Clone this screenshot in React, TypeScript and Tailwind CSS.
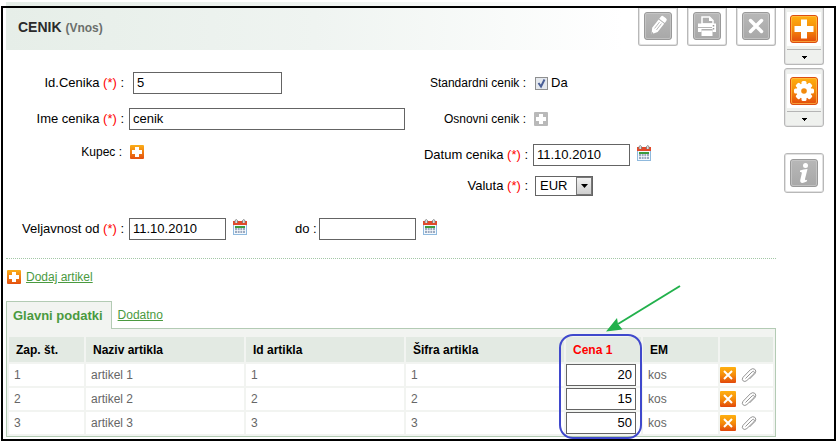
import React from "react";

const rows = [
  { id: 1, name: "artikel 1", price: "20", unit: "kos" },
  { id: 2, name: "artikel 2", price: "15", unit: "kos" },
  { id: 3, name: "artikel 3", price: "50", unit: "kos" },
];

const fieldClass =
  "h-[22px] border border-[#646464] bg-white px-[3px] pb-0.5 text-[13px] leading-4 text-black outline-none";

const PencilGlyph = () => (
  <g transform="rotate(38 14 14)">
    <path d="M10.500 8.500h7V19L14 24.500 10.500 19z" fill="#fff" />
    <path d="M10.500 5q0-2 2-2h3q2 0 2 2v2.500h-7z" fill="#fff" />
    <path d="M12.800 10v8M15.200 10v8" stroke="#b8b8b8" strokeWidth="0.900" />
    <path d="M13 22.500h2L14 24.500z" fill="#999" />
  </g>
);

const PrinterGlyph = () => (
  <g>
    <path d="M9 12V5h7.500L20 8.500V12z" fill="#b0b0b0" stroke="#fff" strokeWidth="1.500" />
    <path d="M16 5v4h4z" fill="#fff" />
    <path d="M5 11.500h18v8.500h-3.500v-3h-11v3H5z" fill="#fff" />
    <path d="M8.500 18.500h11V24h-11z" fill="#fff" />
    <path d="M5 15.500h14" stroke="#b5b5b5" />
    <path d="M20.500 13v1.500M20.500 16v1.500" stroke="#999" strokeWidth="1.500" />
  </g>
);

const CloseGlyph = () => (
  <path d="M8.500 8.500l11 11M19.500 8.500l-11 11" stroke="#fff" strokeWidth="3.500" strokeLinecap="round" />
);

const PlusGlyph = () => <path d="M11 4.500h6V11h6.500v6H17v6.500h-6V17H4.500v-6H11z" fill="#fff" />;

const GearGlyph = () => (
  <g>
    {[0, 45, 90, 135].map((angle) => (
      <rect key={angle} x="11.500" y="4" width="5" height="20" rx="1.500" fill="#fff" transform={`rotate(${angle} 14 14)`} />
    ))}
    <circle cx="14" cy="14" r="7.500" fill="#fff" />
    <circle cx="14" cy="14" r="2.800" fill="#f28a0c" />
  </g>
);

const InfoGlyph = () => (
  <g fill="#fff">
    <circle cx="15.500" cy="6.500" r="2.500" />
    <path d="M10 11.500q3.500-1.500 7.500-1.500l-2.500 10q-.3 1.800 2.200.8l-.5 1.700q-6.700 3.500-6.500-1.300l1.600-7q.3-1.500-1.800-1.200z" />
  </g>
);

const Tile = ({ orange, children }: { orange?: boolean; children: React.ReactNode }) => (
  <svg viewBox="0 0 28 28" className="block size-7" aria-hidden="true">
    <defs>
      <linearGradient id="tile-orange" x1="0" y1="0" x2="0" y2="1">
        <stop offset="0" stopColor="#ffb010" />
        <stop offset="0.5" stopColor="#f58c0a" />
        <stop offset="1" stopColor="#e2480c" />
      </linearGradient>
      <linearGradient id="tile-gray" x1="0" y1="0" x2="0" y2="1">
        <stop offset="0" stopColor="#b8b8b8" />
        <stop offset="1" stopColor="#a8a8a8" />
      </linearGradient>
    </defs>
    <rect x="0.500" y="0.500" width="27" height="27" rx="2.500" fill={orange ? "url(#tile-orange)" : "url(#tile-gray)"} stroke={orange ? "#dd4e10" : "#999"} />
    <rect x="1.500" y="1.500" width="25" height="25" rx="1.500" fill="none" stroke={orange ? "#ffc04d" : "#cbcbcb"} strokeOpacity="0.700" />
    {children}
  </svg>
);

const SmallPlus = ({ gray }: { gray?: boolean }) => (
  <svg viewBox="0 0 14 14" className="block size-3.5" aria-hidden="true">
    <defs>
      <linearGradient id="plus-orange" x1="0" y1="0" x2="0" y2="1">
        <stop offset="0" stopColor="#fbae17" />
        <stop offset="1" stopColor="#e4500f" />
      </linearGradient>
    </defs>
    <rect width="14" height="14" rx="1" fill={gray ? "#b9b9b9" : "url(#plus-orange)"} />
    <path d="M5 2h4v3h3v4H9v3H5V9H2V5h3z" fill="#fff" />
  </svg>
);

const CalendarIcon = () => (
  <svg viewBox="0 0 14 16" className="block h-4 w-3.5" aria-hidden="true">
    <rect x="0.500" y="3" width="13" height="12.500" fill="#f4f9fe" stroke="#8fb9dd" />
    <path d="M0 2h14v4H0z" fill="#e2492a" />
    <path d="M2 7h10v2H2z" fill="#3d9b3d" />
    <path d="M2 9h10v5H2z" fill="#9aa9c0" />
    <path d="M2 11.500h10M4.500 9v5M7 9v5M9.500 9v5" stroke="#fff" strokeWidth="0.700" />
    <path d="M2 4V1.500q1.500-2 2.500 0V4M9.500 4V1.500q1-2 2.500 0V4" fill="#ddd" stroke="#777" strokeWidth="0.800" />
  </svg>
);

const DeleteIcon = () => (
  <svg viewBox="0 0 16 16" className="block size-4" aria-hidden="true">
    <rect width="16" height="16" rx="1" fill="url(#tile-orange)" />
    <path d="M4 4l8 8M12 4l-8 8" stroke="#fff" strokeWidth="2" />
  </svg>
);

const ClipIcon = () => (
  <svg viewBox="0 0 16 16" className="block size-4" fill="none" stroke="#959595" aria-hidden="true">
    <path d="M4.500 11.500l6.700-6.700q1.300-1 2 0t-.3 2l-7 6.700q-2.200 1.800-3.800.4T2 10.300l7.300-7.500q2.500-2 4.500-.5t.2 4.200l-5.500 5.500" />
  </svg>
);

const HeaderButton = ({ label, children }: { label: string; children: React.ReactNode }) => (
  <button type="button" aria-label={label} className="rounded-b-[3px] border-x border-b border-[#b8b8b8] bg-white px-[5px] pt-1 pb-[5px] shadow-[inset_0_0_0_1px_#e2e2e2]">
    <Tile>{children}</Tile>
  </button>
);

const MenuButton = ({ label, cut, children }: { label: string; cut?: boolean; children: React.ReactNode }) => (
  <button
    type="button"
    aria-label={label}
    className={`flex flex-col items-center border border-[#b8b8b8] bg-[#eff1ee] shadow-[inset_0_0_0_1px_#e2e2e2] ${cut ? "rounded-b-[3px] border-t-0 pt-1" : "rounded-[3px] pt-[5px]"}`}
  >
    <span className="bg-white p-[3px]">
      <Tile orange>{children}</Tile>
    </span>
    <span className="mt-[3px] flex h-[15px] w-[34px] items-center justify-center border-t border-[#b5b5b5]">
      <svg viewBox="0 0 5 3" className="h-[3px] w-[5px]" aria-hidden="true">
        <path d="M0 0h5v1H4v1H3v1H2V2H1V1H0z" />
      </svg>
    </span>
  </button>
);

const Required = () => <span className="text-[#f00]">(*)</span>;

const Label = ({ htmlFor, required, children }: { htmlFor: string; required?: boolean; children: React.ReactNode }) => (
  <label htmlFor={htmlFor} className={`w-[118px] shrink-0 text-right whitespace-nowrap ${required ? "text-[13px]" : "pr-0.5 text-xs"}`}>
    {children} {required && <Required />} :
  </label>
);

const CalendarButton = ({ label }: { label: string }) => (
  <button type="button" aria-label={label} className="ml-[7px] pb-1">
    <CalendarIcon />
  </button>
);

export default function App() {
  return (
    <div className="bg-white pt-0.5 pb-px pl-px font-['Liberation_Sans',Arial,sans-serif] text-xs text-black">
      <div className="mr-[60px] ml-[5px] h-1 bg-linear-to-r from-[#e6eee8] via-[#eff4f1] via-40% to-white to-80%" />
      <div className="flex gap-2 border-2 border-black pr-2.5 pb-0.5 pl-[3px]">
        <main className="min-w-0 flex-1">
          <header className="flex h-[42px] items-start justify-between bg-linear-to-r from-[#e6eee8] via-[#eff4f1] via-40% to-white to-80%">
            <h1 className="pt-2 pl-3 text-sm leading-[22px] font-bold text-[#2b2b2b]">
              CENIK <span className="text-xs text-[#6b6f6c]">(Vnos)</span>
            </h1>
            <div className="flex gap-[9px]">
              <HeaderButton label="Uredi"><PencilGlyph /></HeaderButton>
              <HeaderButton label="Natisni"><PrinterGlyph /></HeaderButton>
              <HeaderButton label="Zapri"><CloseGlyph /></HeaderButton>
            </div>
          </header>

          <form>
            <div className="grid grid-cols-[404px_1fr] pt-[22px]">
              <div className="flex flex-col gap-3.5">
                <div className="flex items-center gap-[9px]">
                  <Label htmlFor="cenik-id" required>Id.Cenika</Label>
                  <input id="cenik-id" defaultValue="5" className={`${fieldClass} w-[149px]`} />
                </div>
                <div className="flex items-center gap-[5px]">
                  <Label htmlFor="cenik-ime" required>Ime cenika</Label>
                  <input id="cenik-ime" defaultValue="cenik" className={`${fieldClass} w-[276px]`} />
                </div>
                <div className="flex items-center gap-1.5">
                  <Label htmlFor="kupec">Kupec</Label>
                  <button id="kupec" type="button"><SmallPlus /></button>
                </div>
              </div>
              <div className="flex flex-col">
                <div className="flex h-[22px] items-center gap-[7px]">
                  <Label htmlFor="standardni">Standardni cenik</Label>
                  <span className="relative">
                    <input id="standardni" type="checkbox" defaultChecked className="peer block size-[13px] appearance-none border border-[#8e8f8f] bg-[#e4e8ee]" />
                    <svg viewBox="0 0 13 13" className="pointer-events-none absolute inset-0 hidden peer-checked:block" aria-hidden="true">
                      <path d="M3.500 6L6 9.500 9.500 2.500" fill="none" stroke="#4a5f97" strokeWidth="2" />
                    </svg>
                  </span>
                  <span className="-ml-1 text-[13px]">Da</span>
                </div>
                <div className="mt-3.5 flex h-[22px] items-center gap-1.5">
                  <Label htmlFor="osnovni">Osnovni cenik</Label>
                  <button id="osnovni" type="button"><SmallPlus gray /></button>
                </div>
                <div className="mt-3.5 flex items-center gap-[5px]">
                  <Label htmlFor="datum" required>Datum cenika</Label>
                  <div className="flex items-center">
                    <input id="datum" defaultValue="11.10.2010" className={`${fieldClass} w-[97px]`} />
                    <CalendarButton label="Izberi datum cenika" />
                  </div>
                </div>
                <div className="mt-2.5 flex items-center gap-[7px]">
                  <Label htmlFor="valuta" required>Valuta</Label>
                  <div className="relative">
                    <select id="valuta" className="block h-5 w-[58px] appearance-none border border-[#646464] bg-white pl-1 text-[13px] leading-4">
                      <option>EUR</option>
                    </select>
                    <span className="pointer-events-none absolute top-px right-px flex h-[18px] w-4 items-center justify-center border border-[#777] bg-linear-to-b from-[#f2f2f2] to-[#cfcfcf]">
                      <svg viewBox="0 0 7 4" className="h-1 w-[7px]" aria-hidden="true"><path d="M0 0h7L3.500 4z" /></svg>
                    </span>
                  </div>
                </div>
              </div>
            </div>

            <div className="flex items-center border-b border-dotted border-[#a3c7a6] pt-[22px] pb-[18px]">
              <div className="flex items-center gap-[5px]">
                <Label htmlFor="od" required>Veljavnost od</Label>
                <input id="od" defaultValue="11.10.2010" className={`${fieldClass} w-[97px]`} />
              </div>
              <CalendarButton label="Izberi datum od" />
              <label htmlFor="do" className="mr-0.5 ml-12 text-[13px]">do :</label>
              <input id="do" className={`${fieldClass} w-[97px]`} />
              <CalendarButton label="Izberi datum do" />
            </div>
          </form>

          <div className="flex items-center gap-[5px] pt-2.5 pl-px leading-4 text-[#4a9a3f]">
            <SmallPlus />
            <a href="#dodaj" className="underline">Dodaj artikel</a>
          </div>

          <nav className="mt-4 flex">
            <a href="#glavni" className="relative z-10 -mb-px border border-b-0 border-[#b3cbb4] bg-[#f2f4f1] pt-1 pr-2 pb-[3px] pl-1.5 text-[13px] leading-5 font-bold text-[#4a9a3f]">Glavni podatki</a>
            <a href="#dodatno" className="px-1.5 pt-1.5 leading-4 text-[#4a9a3f] underline">Dodatno</a>
          </nav>
          <section className="border border-[#b3cbb4] bg-[#f2f4f1] pt-1.5">
            <table className="w-full table-fixed border-separate border-spacing-0.5">
              <colgroup>
                <col className="w-[75px]" />
                <col />
                <col />
                <col />
                <col className="w-[75px]" />
                <col className="w-[75px]" />
                <col className="w-[53px]" />
              </colgroup>
              <thead>
                <tr className="h-[25px] bg-[#e3eae3] text-left">
                  <th className="p-0 pl-[7px]">Zap. št.</th>
                  <th className="p-0 pl-[7px]">Naziv artikla</th>
                  <th className="p-0 pl-[7px]">Id artikla</th>
                  <th className="p-0 pl-[7px]">Šifra artikla</th>
                  <th className="relative p-0 pl-[7px] text-[#f00]">
                    Cena 1
                    <span className="pointer-events-none absolute -top-[3px] -left-[7px] h-[105px] w-[83px] rounded-[14px] border-2 border-[#3f48cc]" />
                    <svg viewBox="0 0 76 48" className="pointer-events-none absolute -top-[53px] left-10 h-12 w-[76px]" aria-hidden="true">
                      <path d="M74 2L12 40" stroke="#22b14c" strokeWidth="2" />
                      <path d="M0 47.500L11 34l1 6 4.500 5.500z" fill="#22b14c" />
                    </svg>
                  </th>
                  <th className="p-0 pl-[7px]">EM</th>
                  <th className="p-0" aria-label="Dejanja" />
                </tr>
              </thead>
              <tbody>
                {rows.map((row) => (
                  <tr key={row.id} className="h-[22px] bg-white text-[#666]">
                    <td className="p-0 pl-[5px]">{row.id}</td>
                    <td className="p-0 pl-[5px]">{row.name}</td>
                    <td className="p-0 pl-[5px]">{row.id}</td>
                    <td className="p-0 pl-[5px]">{row.id}</td>
                    <td className="p-0">
                      <input aria-label={`Cena 1, ${row.name}`} defaultValue={row.price} className={`${fieldClass} block w-[70px] text-right`} />
                    </td>
                    <td className="p-0 pl-[5px]">{row.unit}</td>
                    <td className="p-0">
                      <div className="flex gap-[5px]">
                        <button type="button" aria-label={`Odstrani ${row.name}`}><DeleteIcon /></button>
                        <button type="button" aria-label={`Priponka ${row.name}`}><ClipIcon /></button>
                      </div>
                    </td>
                  </tr>
                ))}
              </tbody>
            </table>
          </section>
        </main>

        <aside className="flex w-10 flex-col">
          <MenuButton label="Dodaj" cut><PlusGlyph /></MenuButton>
          <div className="mt-[3px] flex flex-col"><MenuButton label="Nastavitve"><GearGlyph /></MenuButton></div>
          <button type="button" aria-label="Informacije" className="mt-[26px] rounded-[3px] border border-[#b8b8b8] bg-white p-[5px] shadow-[inset_0_0_0_1px_#e2e2e2]">
            <Tile><InfoGlyph /></Tile>
          </button>
        </aside>
      </div>
    </div>
  );
}
